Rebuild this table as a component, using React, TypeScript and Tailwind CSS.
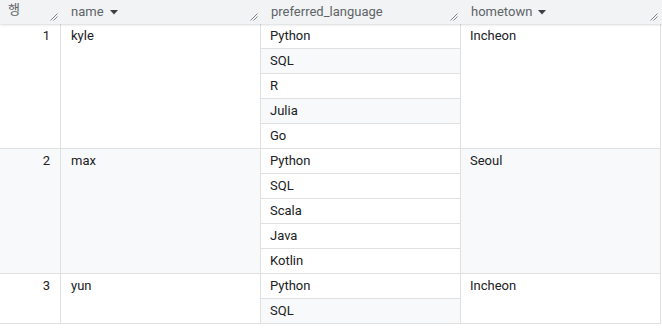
import React from "react";

type Row = { n: number; name: string; langs: string[]; town: string };

const rows: Row[] = [
  { n: 1, name: "kyle", langs: ["Python", "SQL", "R", "Julia", "Go"], town: "Incheon" },
  { n: 2, name: "max", langs: ["Python", "SQL", "Scala", "Java", "Kotlin"], town: "Seoul" },
  { n: 3, name: "yun", langs: ["Python", "SQL"], town: "Incheon" },
];

function Grip() {
  return (
    <svg width="8" height="8" viewBox="0 0 8 8" className="absolute right-[3px] bottom-[3px]">
      <path d="M7.5 0.5 L0.5 7.5 M7.5 3.5 L3.5 7.5" stroke="#80868b" strokeWidth="1" />
    </svg>
  );
}

function SortArrow() {
  return (
    <svg width="8" height="5" viewBox="0 0 8 5" className="ml-[6px] mt-[1px]">
      <path d="M0 0 L8 0 L4 4.5 Z" fill="#3c4043" />
    </svg>
  );
}

function HeadCell({ label, width, sort }: { label: string; width: string; sort?: boolean }) {
  return (
    <div className={`relative flex items-center pl-[10px] ${width}`}>
      <span>{label}</span>
      {sort && <SortArrow />}
      <Grip />
    </div>
  );
}

export default function App() {
  return (
    <div className="w-[662px] h-[328px] bg-white text-[13px] text-[#202124] font-['Roboto',sans-serif] overflow-hidden">
      {/* header */}
      <div className="relative z-10 flex h-[24px] bg-[#f1f3f4] text-[#5f6368] shadow-[0_1px_2px_rgba(60,64,67,0.2)]">
        <div className="relative w-[61px] pl-[8px] pt-[1px] text-[13px] leading-[15px] font-['Noto_Sans_CJK_KR',sans-serif]">
          <span className="block">행</span>
          <Grip />
        </div>
        <HeadCell label="name" width="w-[200px]" sort />
        <HeadCell label="preferred_language" width="w-[200px]" />
        <HeadCell label="hometown" width="w-[200px]" sort />
      </div>

      {rows.map((r) => {
        const bg = r.n === 2 ? "bg-[#f8f9fa]" : "bg-white";
        return (
          <div key={r.n} className={`flex w-[661px] border-b border-[#e0e0e0] ${bg}`}>
            <div className="w-[61px] border-r border-[#e0e0e0] pr-[10px] text-right leading-[24px]">
              {r.n}
            </div>
            <div className="w-[200px] border-r border-[#e0e0e0] pl-[10px] leading-[24px]">
              {r.name}
            </div>
            <div className="w-[200px] border-r border-[#e0e0e0] flex flex-col">
              {r.langs.map((l, i) => {
                const sub =
                  r.n !== 2 && i % 2 === 1 ? "bg-[#f8f9fa]" : "bg-white";
                const last = i === r.langs.length - 1;
                return (
                  <div
                    key={l + i}
                    className={`h-[24px] pl-[9px] leading-[24px] ${sub} ${last ? "" : "h-[25px] border-b border-[#e0e0e0]"}`}
                  >
                    {l}
                  </div>
                );
              })}
            </div>
            <div className="w-[200px] border-r border-[#e0e0e0] pl-[9px] leading-[24px]">
              {r.town}
            </div>
          </div>
        );
      })}
    </div>
  );
}
